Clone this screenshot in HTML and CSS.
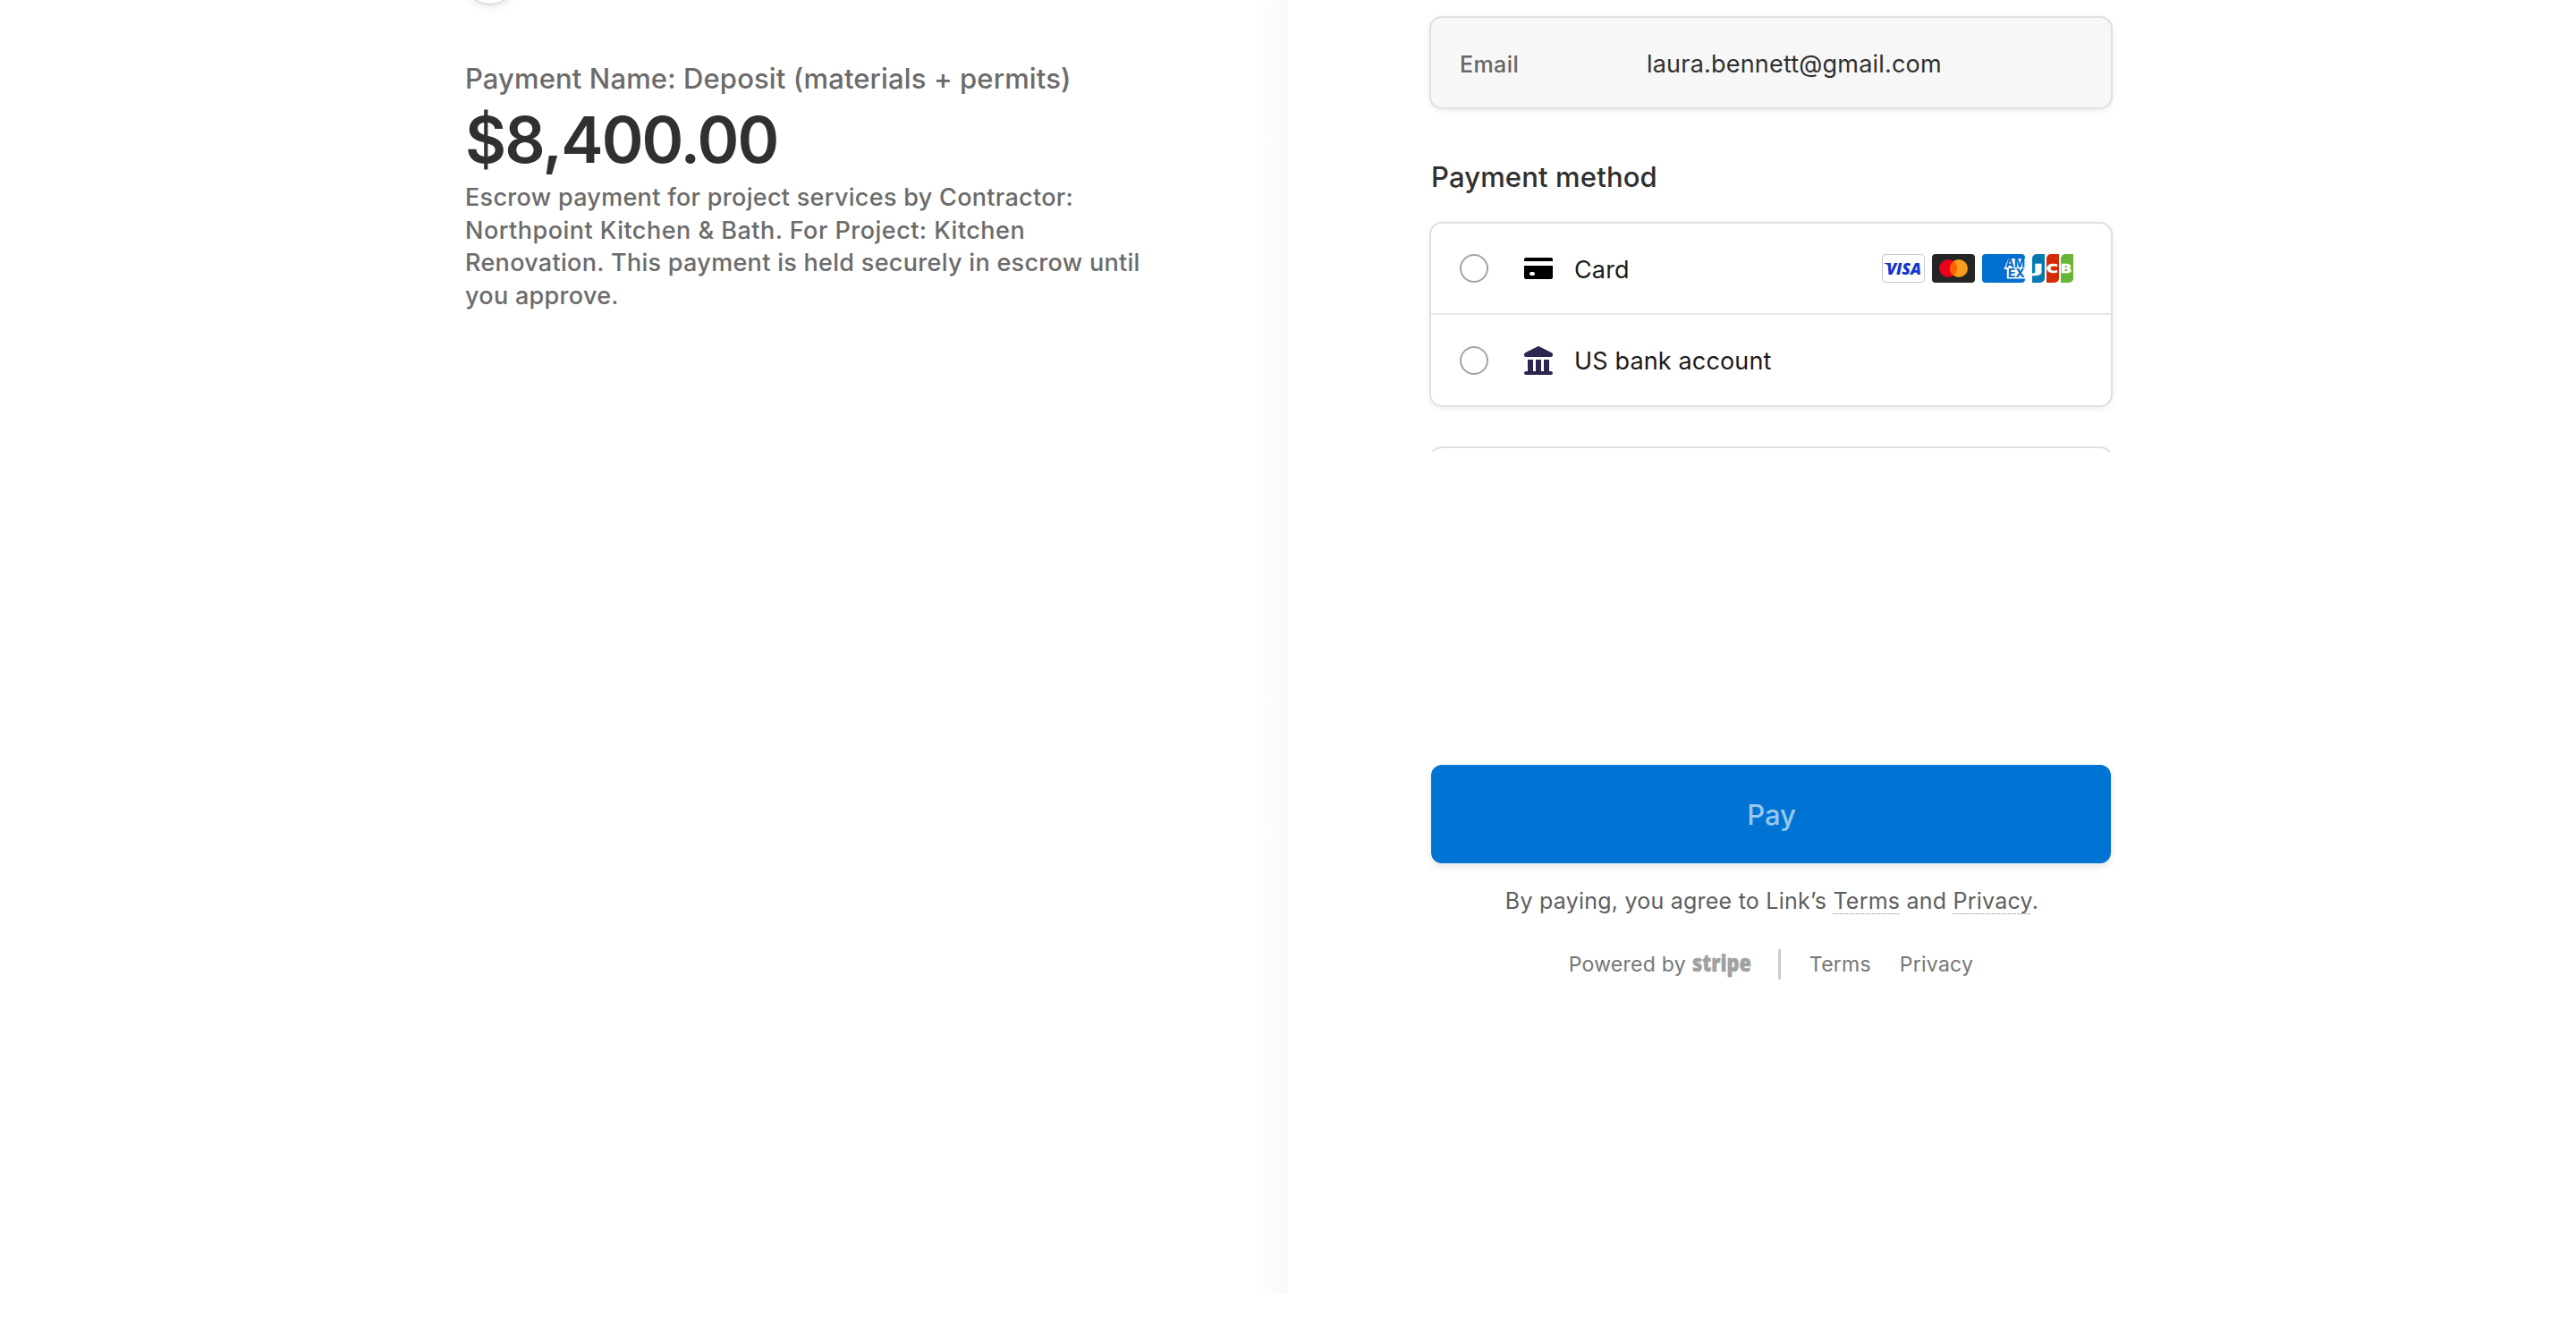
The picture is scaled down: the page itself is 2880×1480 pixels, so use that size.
FILE: index.html
```
<!DOCTYPE html>
<html lang="en">
<head>
  <meta charset="UTF-8" />
  <meta name="viewport" content="width=device-width, initial-scale=1" />
  <title>Checkout</title>
  <link rel="stylesheet" href="styles.css">
</head>
<body>
<div class="checkout">
  <section class="overview">
    <div class="business-icon"></div>
    <div class="summary">
      <div class="product-name">Payment Name: Deposit (materials + permits)</div>
      <div class="amount">$8,400.00</div>
      <p class="description">Escrow payment for project services by Contractor:<br><span class="wide">Northpoint Kitchen &amp; Bath. For Project: Kitchen</span><br>Renovation. This payment is held securely in escrow until<br>you approve.</p>
    </div>
  </section>

  <main class="payment">
    <div class="email-box">
      <span class="email-label">Email</span>
      <span class="email-value">laura.bennett@gmail.com</span>
    </div>

    <h2 class="section-title">Payment method</h2>
    <div class="methods">
      <div class="method">
        <span class="radio"></span>
        <svg class="method-icon" viewBox="0 0 16 16">
          <path fill="#000" d="M0 3a1 1 0 0 1 1-1h14a1 1 0 0 1 1 1v1H0z"/>
          <path fill="#000" fill-rule="evenodd" d="M0 6.500h16V13a1 1 0 0 1-1 1H1a1 1 0 0 1-1-1zM4 10a1 1 0 0 0 0 2h1a1 1 0 0 0 0-2z"/>
        </svg>
        <span class="method-name">Card</span>
        <div class="brands">
          <svg class="brand" viewBox="0 0 24 16">
            <rect x=".25" y=".25" width="23.500" height="15.500" rx="1.800" fill="#fff" stroke="#c9c9c9" stroke-width=".5"/>
            <text x="2.600" y="11.300" textLength="19.400" lengthAdjust="spacingAndGlyphs" class="visa">VISA</text>
            <path fill="#1434cb" d="M1.300 5h2.800l.8 1.200v1.900C4.100 6.500 3 5.700 1.300 5.300z"/>
          </svg>
          <svg class="brand" viewBox="0 0 24 16">
            <rect width="24" height="16" rx="2" fill="#252525"/>
            <circle cx="9" cy="8" r="5" fill="#eb001b"/>
            <circle cx="15" cy="8" r="5" fill="#f79e1b"/>
            <path fill="#ff5f00" d="M12 4a5 5 0 0 1 0 8 5 5 0 0 1 0-8z"/>
          </svg>
          <svg class="brand" viewBox="0 0 24 16">
            <rect width="24" height="16" rx="2" fill="#006fcf"/>
            <path fill="#fff" d="M14.700 2.500H24v11.200H13.900V8.500h-1.700z"/>
            <text x="13.100" y="7.500" textLength="10.800" lengthAdjust="spacingAndGlyphs" class="amex">AM</text>
            <text x="14.500" y="13" textLength="9.400" lengthAdjust="spacingAndGlyphs" class="amex">EX</text>
          </svg>
          <svg class="brand" viewBox="0 0 24 16">
            <path fill="#047ab1" d="M2.500 0H7v13.500A2.500 2.500 0 0 1 4.500 16H0V2.500A2.500 2.500 0 0 1 2.500 0z"/>
            <path fill="#d42d06" d="M10.500 0H15v13.500a2.500 2.500 0 0 1-2.500 2.500H8V2.500A2.500 2.500 0 0 1 10.500 0z"/>
            <path fill="#67b637" d="M18.500 0H23v13.500a2.500 2.500 0 0 1-2.500 2.500H16V2.500A2.500 2.500 0 0 1 18.500 0z"/>
            <text x=".5" y="10.700" textLength="5.800" lengthAdjust="spacingAndGlyphs" class="jcb">J</text>
            <text x="8" y="10.700" textLength="6.400" lengthAdjust="spacingAndGlyphs" class="jcb">C</text>
            <text x="15.700" y="10.700" textLength="6.400" lengthAdjust="spacingAndGlyphs" class="jcb">B</text>
          </svg>
        </div>
      </div>
      <div class="method">
        <span class="radio"></span>
        <svg class="method-icon" viewBox="0 0 16 16">
          <path fill="#2b2751" d="M7.600.1a1 1 0 0 1 .8 0l7 3.500c.4.200.6.500.6.900v.5a1 1 0 0 1-1 1H1a1 1 0 0 1-1-1v-.5c0-.4.200-.7.600-.9zM2 7.500h3V14h1.500V7.500h3V14H11V7.500h3V14h1a1 1 0 0 1 1 1 1 1 0 0 1-1 1H1a1 1 0 0 1-1-1 1 1 0 0 1 1-1h1z"/>
        </svg>
        <span class="method-name">US bank account</span>
      </div>
    </div>

    <div class="link-clip"><div class="link-box"></div></div>

    <button class="pay-btn" type="button">Pay</button>
    <p class="agreement">By paying, you agree to Link’s <a href="#">Terms</a> and <a href="#">Privacy</a>.</p>

    <footer>
      <span>Powered by</span>
      <svg class="stripe" viewBox="0 0 67 40"><text x="0" y="28" textLength="66" lengthAdjust="spacingAndGlyphs">stripe</text></svg>
      <span class="divider"></span>
      <a href="#">Terms</a>
      <a href="#" class="foot-privacy">Privacy</a>
    </footer>
  </main>
</div>
</body>
</html>
```

FILE: styles.css
```
* { box-sizing:border-box; }
body { margin:0; background:#fff; color:#303030; font-family:Inter,'Liberation Sans',sans-serif; }
a { color:inherit; text-decoration:none; }
.checkout { display:grid; grid-template-columns:1fr 1fr; height:1480px; overflow:hidden; }

/* Left side */
.overview { padding-left:520px; background:linear-gradient(to left,#f9f9f9,#fff 36px) no-repeat 0 0/100% 1446px; }
.business-icon { width:56px; height:56px; margin-top:-52px; border-radius:50%; background:#fff; box-shadow:0 0 0 2px rgba(0,0,0,.06),0 4px 10px rgba(0,0,0,.1); }
.summary { margin-top:64px; white-space:nowrap; }
.product-name { height:40px; line-height:40px; font-size:31px; font-weight:500; color:#6b6b6b; letter-spacing:.12px; }
.amount { height:88px; margin-top:4px; line-height:88px; font-size:71px; font-weight:600; letter-spacing:-1.850px; }
.description { margin:3px 0 0; font-size:27px; font-weight:500; line-height:36.700px; color:#6b6b6b; letter-spacing:.3px; }
.description .wide { letter-spacing:.48px; }

/* Right side */
.payment { padding:18px 0 0 158px; }
.email-box { width:764px; height:104px; display:flex; align-items:center; border:2px solid #e0e0e0; border-radius:14px; background:#f7f7f7; padding:2px 0 0 32px; box-shadow:0 2px 6px rgba(0,0,0,.07); }
.email-label { width:209px; padding-top:2px; font-size:25px; font-weight:500; color:#666; letter-spacing:.4px; }
.email-value { font-size:27px; letter-spacing:.2px; }
.section-title { height:40px; margin:56px 0 30px 2px; line-height:40px; font-size:31px; font-weight:500; letter-spacing:.15px; }
.methods { width:764px; border:2px solid #e0e0e0; border-radius:14px; box-shadow:0 2px 6px rgba(0,0,0,.07); }
.method { height:100px; display:flex; align-items:center; padding:0 40px 0 32px; }
.method + .method { height:103px; border-top:2px solid #e6e6e6; }
.radio { width:32px; height:32px; border:2px solid #a3a3a3; border-radius:50%; }
.method-icon { width:32px; height:32px; margin:0 24px 0 40px; }
.method-name { padding-top:2px; font-size:27px; color:#1a1a1a; letter-spacing:.15px; }
.brands { display:flex; gap:8px; margin-left:auto; }
.brand { width:48px; height:32px; }
.visa { font:italic 800 8.900px 'Open Sans',sans-serif; fill:#1434cb; }
.amex { font:800 6.300px Inter,sans-serif; fill:#006fcf; letter-spacing:0; }
.jcb { font:700 7px 'DejaVu Sans',sans-serif; fill:#fff; stroke:#fff; stroke-width:.25px; }
.link-clip { width:764px; height:6px; margin-top:44px; overflow:hidden; }
.link-box { height:60px; border:2px solid #e0e0e0; border-radius:14px; }
.pay-btn { display:block; width:760px; height:110px; margin:350px 0 0 2px; padding:1px 0 0 1px; border:0; border-radius:12px; background:#0074d4; color:#99c7ee; font:500 31px Inter,sans-serif; box-shadow:0 4px 8px rgba(0,0,0,.1); }
.agreement { width:764px; height:36px; margin:24px 0 0 1px; line-height:36px; font-size:25px; color:#5e5e5e; text-align:center; white-space:nowrap; letter-spacing:.23px; }
.agreement a { text-decoration:underline dotted #8a8a8a 1px; text-underline-offset:5px; text-decoration-skip-ink:none; }
footer { width:764px; height:34px; margin-top:36px; display:flex; align-items:center; justify-content:center; font-size:23px; color:#767676; letter-spacing:.25px; }
.stripe { width:67px; height:40px; margin-left:7px; overflow:visible; }
.stripe text { font:800 26px 'Open Sans',sans-serif; fill:#a1a1a1; stroke:#a1a1a1; stroke-width:.5px; letter-spacing:0; }
.divider { width:3px; height:34px; margin:0 32px 0 29px; background:#ccc; }
.foot-privacy { margin-left:32px; }
```
